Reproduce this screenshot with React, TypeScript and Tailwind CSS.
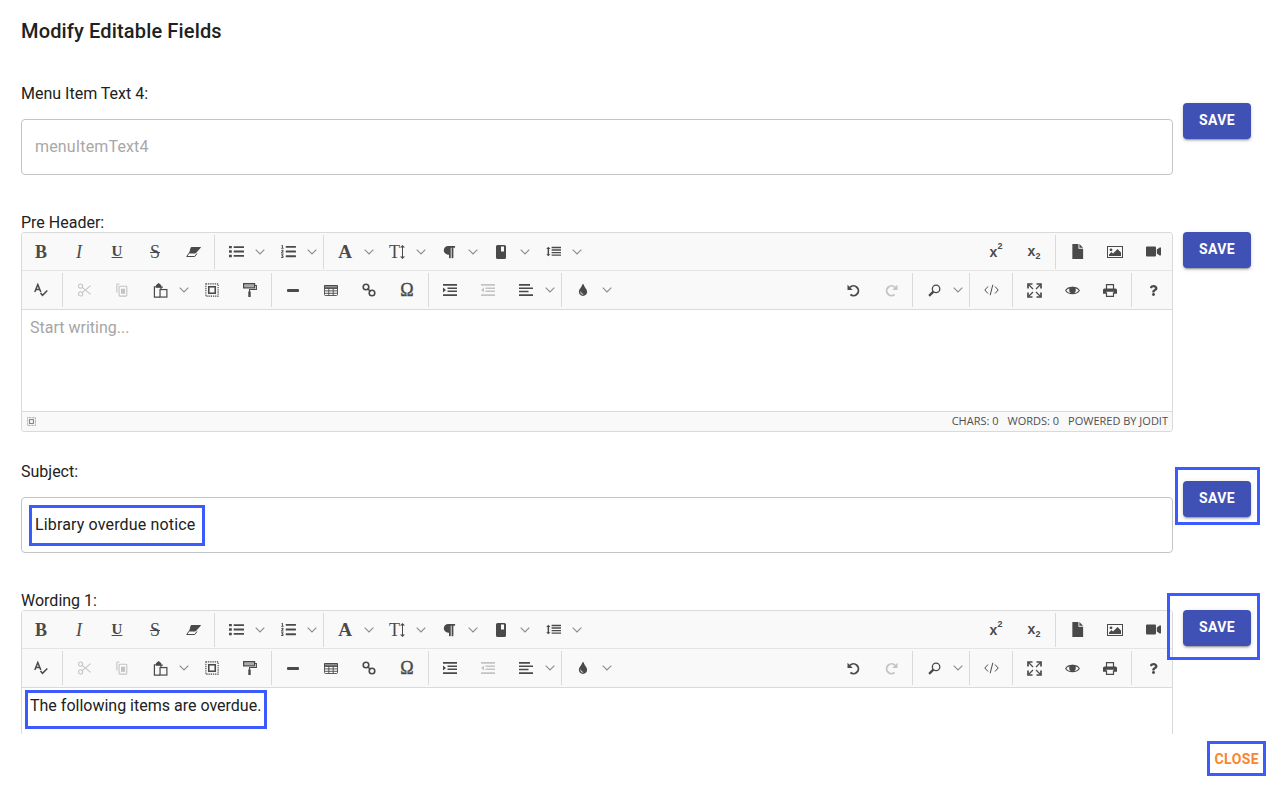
import React from 'react';
import { FaListOl, FaParagraph, FaQuestion, FaVideo, FaTint } from 'react-icons/fa';

const Btn: React.FC<{ children: React.ReactNode; dim?: boolean }> = ({ children, dim }) => (
  <div className={`w-[38px] h-[37px] flex items-center justify-center shrink-0 ${dim ? 'text-[#c4c4c4]' : 'text-[#4a4a4a]'}`}>
    {children}
  </div>
);

const Tr = () => (
  <div className="w-[14px] h-[37px] flex items-center shrink-0">
    <svg width="10" height="6" viewBox="0 0 10 6" fill="none" stroke="#8c8c8c" strokeWidth="1.1">
      <path d="M0.7 0.7 5 5 9.3 0.7" />
    </svg>
  </div>
);

const Sep = () => <div className="w-px h-[34px] mx-[2px] bg-[#dadada] shrink-0" />;

const Letter: React.FC<{ className: string; children: React.ReactNode }> = ({ className, children }) => (
  <span className={`font-['Liberation_Serif',serif] leading-none ${className}`}>{children}</span>
);

const Ic: React.FC<{ children: React.ReactNode; size?: number }> = ({ children, size = 16 }) => (
  <svg width={size} height={size} viewBox="0 0 16 16" fill="currentColor">{children}</svg>
);

const Toolbar = () => (
  <div className="bg-[#f9f9f9] border-b border-[#dadada]">
    <div className="flex items-center h-[37px] border-b border-[#e4e4e4] box-content">
      <Btn><Letter className="font-bold text-[18px]">B</Letter></Btn>
      <Btn><Letter className="italic text-[18px]">I</Letter></Btn>
      <Btn><Letter className="font-bold text-[15px] underline">U</Letter></Btn>
      <Btn><Letter className="text-[18px] line-through">S</Letter></Btn>
      <Btn>
        <svg width="15" height="10" viewBox="0 0 15 10" fill="none" stroke="currentColor">
          <path d="M5.2.5H14.5L9.5 6H3.6L5.2.5z" fill="currentColor" />
          <path d="M3.6 5.5.7 9.5H8.8L11 6.5" strokeWidth="1" />
        </svg>
      </Btn>
      <Sep />
      <Btn>
        <Ic size={15}>
          <path d="M0 2h3v2.6H0zM0 6.7h3v2.6H0zM0 11.4h3V14H0z" />
          <path d="M5 2.3h11v2H5zM5 7h11v2H5zM5 11.7h11v2H5z" />
        </Ic>
      </Btn><Tr />
      <Btn><FaListOl size={15} /></Btn><Tr />
      <Sep />
      <Btn><Letter className="font-bold text-[19px]">A</Letter></Btn><Tr />
      <Btn>
        <Letter className="text-[18px]">T</Letter>
        <svg width="5" height="14" viewBox="0 0 5 14" fill="currentColor"><path d="M2.5 0 5 2.5H3V11.5H5L2.5 14 0 11.5H2V2.5H0z" /></svg>
      </Btn><Tr />
      <Btn><FaParagraph size={14} /></Btn><Tr />
      <Btn>
        <svg width="10" height="14" viewBox="0 0 10 14" fill="currentColor">
          <path fillRule="evenodd" d="M1.5 0h7A1.5 1.5 0 0 1 10 1.5v11A1.5 1.5 0 0 1 8.500 14h-7A1.500 1.500 0 0 1 0 12.500v-11A1.500 1.500 0 0 1 1.500 0zM5 1.500v5h3v-5z" />
        </svg>
      </Btn><Tr />
      <Btn>
        <Ic size={15}>
          <path d="M2.500 3 4.800 5.200H3.300v5.600h1.500L2.500 13 .2 10.800h1.500V5.200H.2z" />
          <path d="M6 3h10v1.500H6zM6 5.700h10v1.500H6zM6 8.400h10v1.500H6zM6 11.100h10v1.500H6z" />
        </Ic>
      </Btn><Tr />
      <div className="flex-1" />
      <Btn><span className="font-['Liberation_Sans',sans-serif] font-bold text-[14px] leading-none">x<sup className="text-[9px] align-[3px] leading-none">2</sup></span></Btn>
      <Btn><span className="font-['Liberation_Sans',sans-serif] font-bold text-[14px] leading-none">x<sub className="text-[9px] align-[-1px] leading-none">2</sub></span></Btn>
      <Sep />
      <Btn><Ic size={15}><path d="M2.500 0H9v5h5v11H2.500zM10 0l4 4h-4z" /></Ic></Btn>
      <Btn>
        <Ic>
          <path fillRule="evenodd" d="M0 2h16v12H0zm1 1v10h14V3z" />
          <circle cx="4" cy="5.800" r="1.400" />
          <path d="M2 12V10.500L4.500 8l1.500 1.500L10.500 5 14 8.500V12z" />
        </Ic>
      </Btn>
      <Btn><FaVideo size={15} /></Btn>
    </div>
    <div className="flex items-center h-[38px]">
      <Btn>
        <svg width="14" height="14" viewBox="0 0 14 14" fill="none" stroke="currentColor">
          <path d="M.8 9 3.800 1.500 6.800 9M1.800 6.500H5.800" strokeWidth="1.500" />
          <path d="M6.500 10 8.500 12.300 13.300 7.500" strokeWidth="1.500" />
        </svg>
      </Btn>
      <Sep />
      <Btn dim>
        <svg width="15" height="14" viewBox="0 0 16 16" fill="none" stroke="currentColor" strokeWidth="1.200">
          <circle cx="3.500" cy="3.500" r="2.400" /><circle cx="3.500" cy="12.500" r="2.400" />
          <path d="M5.300 5 15 13M5.300 11 15 3" />
        </svg>
      </Btn>
      <Btn dim>
        <svg width="12" height="14" viewBox="0 0 14 16" fill="none" stroke="currentColor" strokeWidth="1.300">
          <path d="M4 1H2a1 1 0 0 0-1 1v9" />
          <rect x="3.600" y="3.600" width="9" height="11.500" rx="1" />
          <path d="M5.800 6.500h4.800v6H5.800z" fill="currentColor" stroke="none" />
        </svg>
      </Btn>
      <Btn>
        <svg width="15" height="15" viewBox="0 0 15 16" fill="none" stroke="currentColor" strokeWidth="1.300">
          <path d="M3.500 4H1v11h6" />
          <path d="M3.300 4.500V2.600L5.500.8l2.200 1.800v1.900z" fill="currentColor" />
          <rect x="7" y="7" width="7.300" height="8" />
          <path d="M10 4.500h-2v2.500" />
        </svg>
      </Btn><Tr />
      <Btn>
        <svg width="14" height="14" viewBox="0 0 16 16" fill="none" stroke="currentColor">
          <rect x="1" y="1" width="14" height="14" strokeDasharray="1.500 1" strokeWidth="1.300" />
          <rect x="4.300" y="4.300" width="7.400" height="7.400" strokeWidth="1.800" />
        </svg>
      </Btn>
      <Btn>
        <svg width="14" height="14" viewBox="0 0 14 14" fill="none" stroke="currentColor">
          <rect x=".6" y=".6" width="11" height="4.300" strokeWidth="1.200" fill="currentColor" fillOpacity=".45" />
          <path d="M11.600 2.500h1.800V6.500H6.500V9" strokeWidth="1.100" />
          <rect x="5.300" y="8.500" width="2.400" height="5.500" fill="currentColor" stroke="none" />
        </svg>
      </Btn>
      <Sep />
      <Btn><div className="w-[12px] h-[3px] rounded-[1px] bg-current" /></Btn>
      <Btn>
        <svg width="14" height="11" viewBox="0 0 14 11" fill="none" stroke="currentColor" strokeWidth=".9" >
          <rect x=".5" y=".5" width="13" height="10" rx="1" />
          <path d="M.5 3.400h13M.5 5.900h13M.5 8.300h13M4.800 3.400v7M9.200 3.400v7" />
          <path d="M.5.500h13v2.600H.5z" fill="currentColor" fillOpacity=".6" />
        </svg>
      </Btn>
      <Btn>
        <svg width="14" height="14" viewBox="0 0 14 14" fill="none" stroke="currentColor" strokeWidth="1.600">
          <circle cx="4" cy="4" r="2.800" /><circle cx="10" cy="10" r="2.800" />
          <path d="M5.500 5.500 8.500 8.500" />
        </svg>
      </Btn>
      <Btn><Letter className="text-[18px] [-webkit-text-stroke:0.4px_currentColor]">Ω</Letter></Btn>
      <Sep />
      <Btn>
        <svg width="14" height="12" viewBox="0 0 14 12" fill="currentColor">
          <path d="M0 0h14v1.700H0zM4.500 3.400H14v1.500H4.500zM4.500 6.600H14v1.500H4.500zM0 10.300h14V12H0zM0 3.600 3 6 0 8.400z" />
        </svg>
      </Btn>
      <Btn dim>
        <svg width="14" height="12" viewBox="0 0 14 12" fill="currentColor">
          <path d="M0 0h14v1.700H0zM4.500 3.400H14v1.500H4.500zM4.500 6.600H14v1.500H4.500zM0 10.300h14V12H0zM3 3.600 0 6l3 2.400z" />
        </svg>
      </Btn>
      <Btn>
        <svg width="14" height="12" viewBox="0 0 14 12" fill="currentColor">
          <path d="M0 0h11v1.700H0zM0 3.400h14v1.500H0zM0 6.800h9.500v1.500H0zM0 10.300h14V12H0z" />
        </svg>
      </Btn><Tr />
      <Sep />
      <Btn><FaTint size={12} /></Btn><Tr />
      <div className="flex-1" />
      <Btn>
        <svg width="13" height="13" viewBox="0 0 13 13" fill="none" stroke="currentColor" strokeWidth="1.900">
          <path d="M3 3.300A4.900 4.900 0 1 1 3.400 10.600" />
          <path d="M.5.800V6h5.200z" fill="currentColor" stroke="none" />
        </svg>
      </Btn>
      <Btn dim>
        <svg width="13" height="13" viewBox="0 0 13 13" fill="none" stroke="currentColor" strokeWidth="1.900">
          <path d="M10 3.300A4.900 4.900 0 1 0 9.600 10.600" />
          <path d="M12.500.8V6H7.300z" fill="currentColor" stroke="none" />
        </svg>
      </Btn>
      <Sep />
      <Btn>
        <svg width="13" height="13" viewBox="0 0 14 14" fill="none" stroke="currentColor" strokeWidth="1.400">
          <circle cx="8.700" cy="5.300" r="4" />
          <path d="M5.800 8.200 1.200 12.800" strokeWidth="2.400" />
        </svg>
      </Btn><Tr />
      <Sep />
      <Btn>
        <svg width="15" height="12" viewBox="0 0 15 12" fill="none" stroke="currentColor" strokeWidth="1">
          <path d="M4 2.500.8 6 4 9.500M11 2.500 14.200 6 11 9.500M8.800 .8 6.200 11.200" />
        </svg>
      </Btn>
      <Sep />
      <Btn>
        <svg width="15" height="15" viewBox="0 0 15 15" fill="none" stroke="currentColor" strokeWidth="1.700">
          <path d="M1 5.500V1H5.500M9.500 1H14V5.500M14 9.500V14H9.500M5.500 14H1V9.500" />
          <path d="M1.500 1.500 6 6M13.500 1.500 9 6M13.500 13.500 9 9M1.500 13.500 6 9" strokeWidth="1.200" />
        </svg>
      </Btn>
      <Btn>
        <svg width="15" height="11" viewBox="0 0 15 11" fill="none" stroke="currentColor" strokeWidth="1.100">
          <path d="M.7 5.500C3 1.300 12 1.300 14.300 5.500 12 9.700 3 9.700.7 5.500z" />
          <circle cx="7.500" cy="5" r="3.300" fill="currentColor" stroke="none" />
        </svg>
      </Btn>
      <Btn>
        <svg width="14" height="13" viewBox="0 0 14 13" fill="none" stroke="currentColor" strokeWidth="1.200">
          <path d="M3.500 5V.6h7V5" />
          <path d="M1.500 4.500h11A1.500 1.500 0 0 1 14 6v3.800H11V7.800H3v2H0V6a1.500 1.500 0 0 1 1.500-1.500z" fill="currentColor" stroke="none" />
          <path d="M3.500 8.300v4h7v-4" />
        </svg>
      </Btn>
      <Sep />
      <Btn><FaQuestion size={11} /></Btn>
    </div>
  </div>
);

const Highlight: React.FC<{ className: string }> = ({ className }) => (
  <div className={`absolute border-[3px] border-[#3d5afe] pointer-events-none ${className}`} />
);

const SaveButton: React.FC<{ highlight?: string }> = ({ highlight }) => (
  <div className="relative mt-[19px] ml-[10px]">
    <button className="w-[68px] h-[36px] pb-[1px] rounded-[4px] bg-[#3f51b5] text-white text-[14px] font-bold tracking-[0.4px] shadow-[0_3px_1px_-2px_rgba(0,0,0,0.2),0_2px_2px_0_rgba(0,0,0,0.14),0_1px_5px_0_rgba(0,0,0,0.12)]">
      SAVE
    </button>
    {highlight && <Highlight className={highlight} />}
  </div>
);

const Label: React.FC<{ children: React.ReactNode }> = ({ children }) => (
  <div className="text-[16px] leading-[19px] text-[#212121]">{children}</div>
);

const InputBox: React.FC<{ children: React.ReactNode }> = ({ children }) => (
  <div className="relative mt-[16px] h-[56px] border border-[#c4c4c4] rounded-[4px] pl-[13px] flex items-center text-[16px] tracking-[0.15px] text-[#212121]">
    {children}
  </div>
);

export default function App() {
  return (
    <div className="h-[785px] w-[1272px] bg-white flex flex-col font-['Roboto',sans-serif] overflow-hidden">
      <div className="h-[734px] overflow-hidden pl-[21px]">
        <h2 className="pt-[15px] h-[47px] text-[20px] leading-[32px] font-medium text-[#212121] tracking-[0.15px]">Modify Editable Fields</h2>

        <div className="flex mt-[37px]">
          <div className="w-[1152px]">
            <Label>Menu Item Text 4:</Label>
            <InputBox><span className="text-[#a8a8a8]">menuItemText4</span></InputBox>
          </div>
          <SaveButton />
        </div>

        <div className="flex mt-[38px]">
          <div className="w-[1152px]">
            <Label>Pre Header:</Label>
            <div className="border border-[#dadada] rounded-[3px] overflow-hidden">
              <Toolbar />
              <div className="h-[101px] pl-[8px] pt-[8px] text-[16px] leading-[19px] text-[#a5a5a5]">Start writing...</div>
              <div className="h-[20px] bg-[#f9f9f9] border-t border-[#dadada] flex items-center justify-between pl-[5px] pr-[4px] font-['Open_Sans',sans-serif] text-[11px] text-[#4f4f4f]">
                <svg width="9" height="9" viewBox="0 0 16 16" fill="none" stroke="#8a8a8a">
                  <rect x="1" y="1" width="14" height="14" strokeDasharray="1.500 1" strokeWidth="1.500" />
                  <rect x="4.500" y="4.500" width="7" height="7" strokeWidth="2" />
                </svg>
                <div className="flex gap-[9px]">
                  <span>CHARS: 0</span>
                  <span>WORDS: 0</span>
                  <span>POWERED BY JODIT</span>
                </div>
              </div>
            </div>
          </div>
          <SaveButton />
        </div>

        <div className="flex mt-[30px]">
          <div className="w-[1152px]">
            <Label>Subject:</Label>
            <InputBox>
              Library overdue notice
              <Highlight className="left-[7px] top-[7px] w-[176px] h-[41px]" />
            </InputBox>
          </div>
          <SaveButton highlight="left-[-8px] top-[-14px] w-[85px] h-[58px]" />
        </div>

        <div className="flex mt-[38px]">
          <div className="w-[1152px]">
            <Label>Wording 1:</Label>
            <div className="border border-[#dadada] rounded-[3px]">
              <Toolbar />
              <div className="relative h-[101px] pl-[8px] pt-[8px] text-[16px] leading-[19px] text-[#212121]">
                The following items are overdue.
                <Highlight className="left-[3px] top-[2px] w-[242px] h-[39px]" />
              </div>
            </div>
          </div>
          <SaveButton highlight="left-[-16px] top-[-17px] w-[93px] h-[67px]" />
        </div>
      </div>

      <div className="flex-1 flex justify-end pr-[13px] pt-[14px]">
        <button className="relative h-[22px] text-[14px] font-bold text-[#fa8531] tracking-[0.4px]">
          CLOSE
          <Highlight className="left-[-8px] top-[-7px] w-[59px] h-[35px]" />
        </button>
      </div>
    </div>
  );
}
